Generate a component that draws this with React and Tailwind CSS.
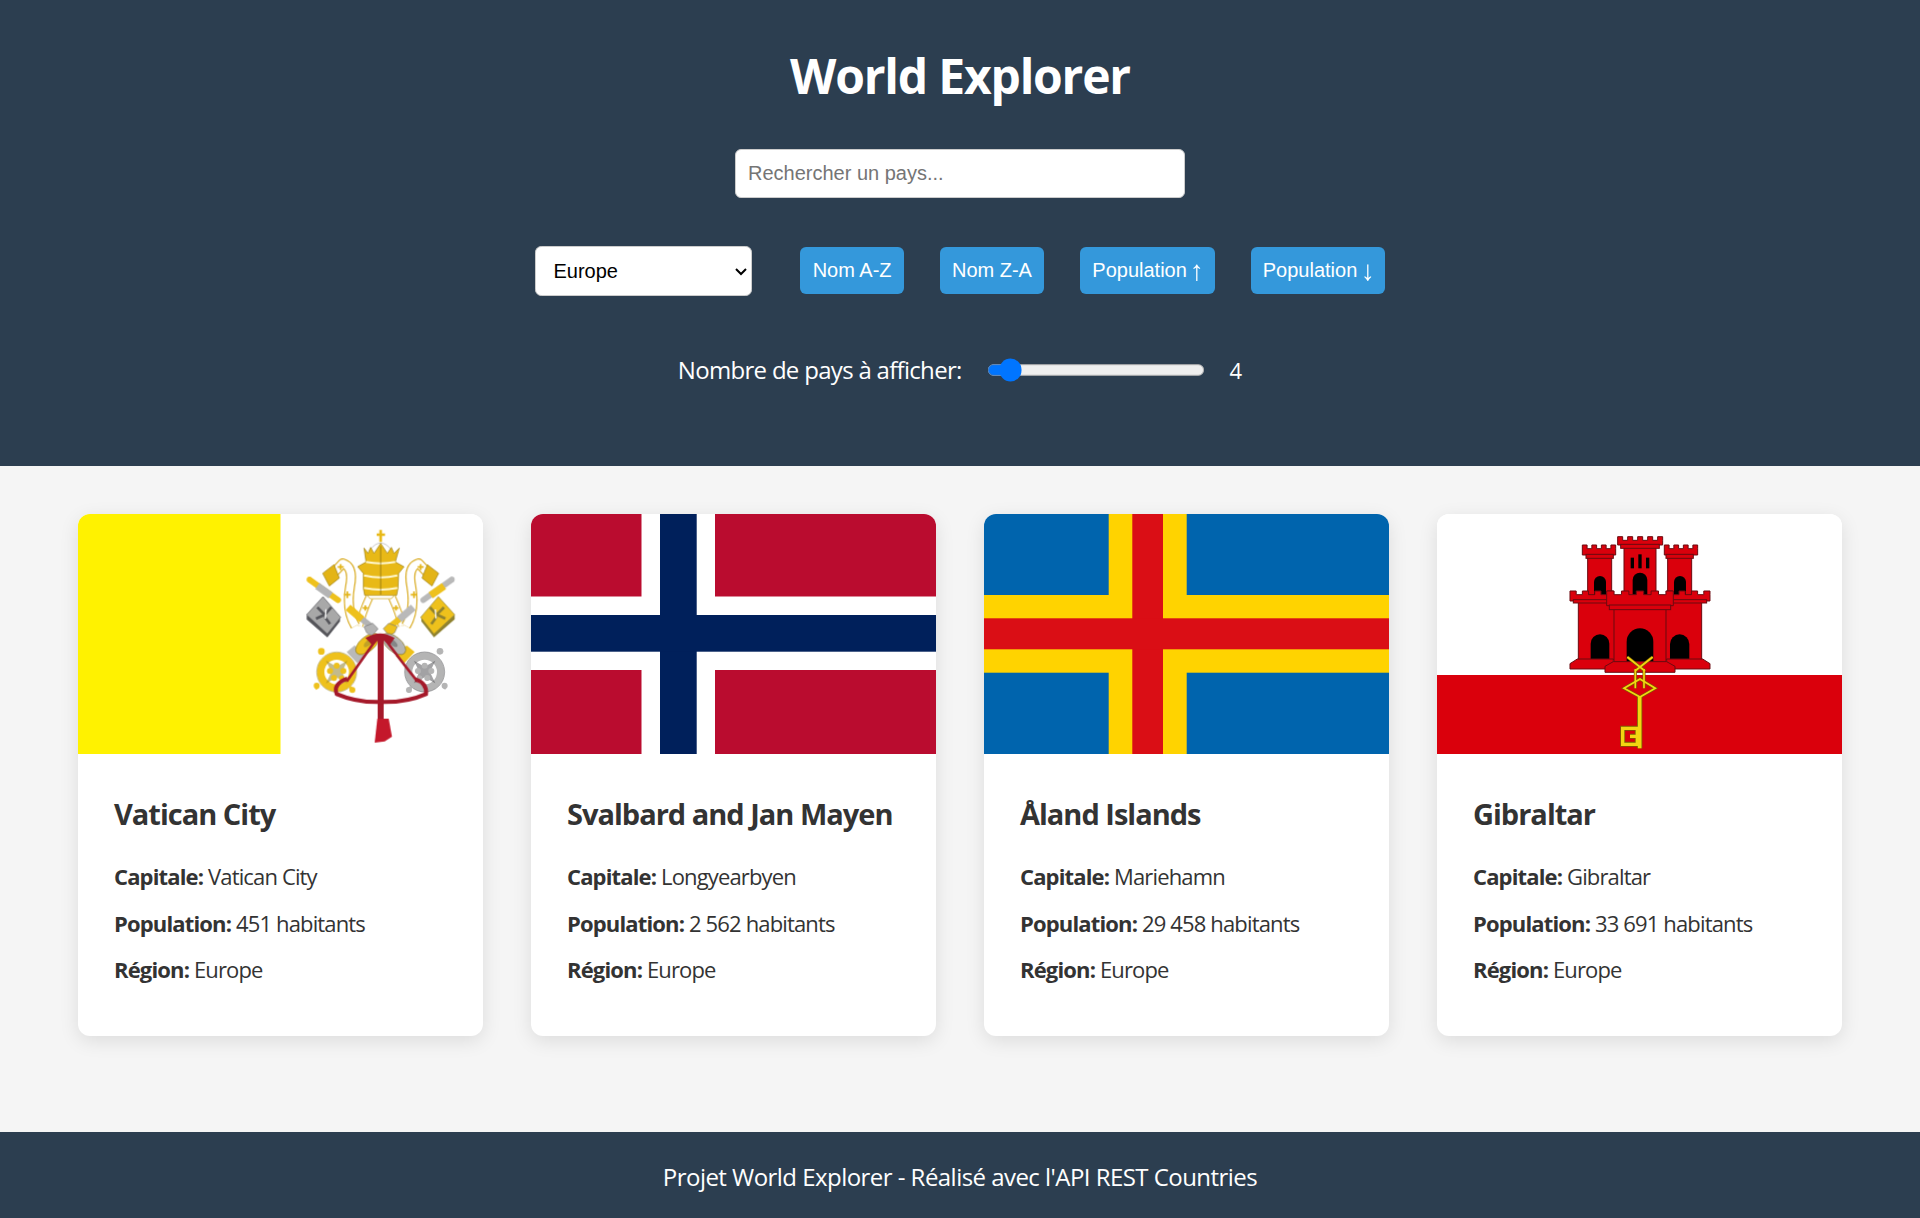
import { useState } from 'react';

const countries = [
  { name: 'Vatican City', capital: 'Vatican City', population: '451', flag: 'va' },
  { name: 'Svalbard and Jan Mayen', capital: 'Longyearbyen', population: '2 562', flag: 'sj' },
  { name: 'Åland Islands', capital: 'Mariehamn', population: '29 458', flag: 'ax' },
  { name: 'Gibraltar', capital: 'Gibraltar', population: '33 691', flag: 'gi' },
];

const sortButtons = [
  { label: 'Nom A-Z' },
  { label: 'Nom Z-A' },
  { label: 'Population ', arrow: '↑' },
  { label: 'Population ', arrow: '↓' },
];

// one papal key, drawn with its bow low on the left and its bit high on the right
function PapalKey({ main, second, dark, bit }) {
  return (
    <g>
      <path d="M400 240 L484 180" stroke={second} strokeWidth="18" strokeLinecap="round" />
      <path d="M422 226 L462 198" stroke={main} strokeWidth="22" />
      <circle cx="486" cy="178" r="8" fill={second} />
      <path d="M302 318 L345 284" stroke={main} strokeWidth="18" />
      <path d="M328 298 L370 262" stroke={second} strokeWidth="22" />
      <path d="M432 352 L394 304 L394 290 L432 338 L494 284 L494 298 Z" fill={dark} />
      <path d="M445 230 L494 284 L432 342 L392 292 Z" fill={bit} stroke={dark} strokeWidth="2" />
      <path d="M420 262 L440 284 M462 262 L442 282 M424 312 L440 290 M440 284 L466 296" stroke={dark} strokeWidth="8" />
      <path d="M436 268 L438 296" stroke="#fff" strokeWidth="4" />
      <path d="M296 310 L322 320 L314 338 L298 348 L280 326 Z" fill={main} stroke="#777" strokeWidth="2" />
      <path d="M170 396 L202 430 L226 408 L194 376 Z" fill={second} />
      <ellipse cx="232" cy="372" rx="42" ry="22" transform="rotate(-40 232 372)" fill={main} stroke="#8a7a20" strokeWidth="2" />
      <ellipse cx="236" cy="368" rx="18" ry="8" transform="rotate(-40 236 368)" fill={dark} opacity="0.5" />
      <circle cx="140" cy="456" r="48" fill="#fff" stroke={main} strokeWidth="22" />
      <circle cx="140" cy="456" r="60" fill="none" stroke={dark} strokeWidth="1.5" />
      <path d="M108 422 L140 440 L172 422 L156 456 L172 490 L140 472 L108 490 L124 456 Z" fill={dark} opacity="0.55" />
      <circle cx="140" cy="437" r="9" fill={main} />
      <circle cx="120" cy="453" r="9" fill={main} />
      <circle cx="160" cy="453" r="9" fill={main} />
      <circle cx="132" cy="474" r="9" fill={main} />
      <circle cx="155" cy="474" r="8" fill={main} />
      <path d="M100 400 L92 390 M84 500 L76 506 M180 500 L188 512" stroke={main} strokeWidth="9" />
      <circle cx="94" cy="394" r="10" fill={main} />
      <circle cx="80" cy="497" r="9" fill={main} />
      <circle cx="187" cy="510" r="9" fill={main} />
    </g>
  );
}

function Lappet() {
  return (
    <g fill="none">
      <path d="M238 232 Q216 280 208 318" stroke="#d8a91c" strokeWidth="24" />
      <path d="M238 232 Q216 280 208 318" stroke="#fff" strokeWidth="18" />
      <path d="M122 168 L158 130 Q192 140 180 200 Q168 270 196 318" stroke="#d8a91c" strokeWidth="30" strokeLinejoin="round" />
      <path d="M122 168 L158 130 Q192 140 180 200 Q168 270 196 318" stroke="#fff" strokeWidth="23" strokeLinejoin="round" />
      <path d="M98 160 L132 134 L148 174 L118 198 Z" fill="#e3b416" stroke="#9a7d10" strokeWidth="2" />
      <path d="M172 214 V234 M162 224 H182 M152 132 V150 M143 141 H161 M226 256 V272 M218 264 H234" stroke="#e3b416" strokeWidth="5" />
    </g>
  );
}

function VaticanFlag() {
  return (
    <svg viewBox="0 0 405 240" className="block h-[240px] w-full">
      <rect width="405" height="240" fill="#fff" />
      <rect width="202.5" height="240" fill="#fff200" />
      <g transform="translate(212 6) scale(0.3333)" style={{ filter: 'blur(1.2px)' }}>
        <Lappet />
        <g transform="translate(544 0) scale(-1 1)"><Lappet /></g>
        <PapalKey main="#eec11c" second="#b9b9b9" dark="#8f8230" bit="#eec11c" />
        <g transform="translate(544 0) scale(-1 1)">
          <PapalKey main="#b4b4b4" second="#eec11c" dark="#55555a" bit="#a8a8a8" />
        </g>
        {/* tiara */}
        <path d="M272 30 V66 M260 44 H285" stroke="#e8b917" strokeWidth="8" />
        <path d="M238 92 Q272 46 306 92" fill="none" stroke="#aaa" strokeWidth="2" />
        <path d="M222 84 L234 100 L242 82 L252 100 L272 70 L292 100 L304 82 L312 100 L328 84 L316 126 L342 140 L326 160 L324 205 L320 226 L224 226 L220 205 L220 160 L203 140 L228 126 Z" fill="#e8b917" stroke="#9a7d10" strokeWidth="2" />
        <path d="M228 126 Q272 134 316 126 M222 166 Q272 178 322 166 M222 204 Q272 214 322 204" fill="none" stroke="#fff8d0" strokeWidth="6" />
        <path d="M272 78 V224" stroke="#7a6510" strokeWidth="2" />
        <path d="M232 226 H312 L304 236 H240 Z" fill="#fff" stroke="#c9a21a" strokeWidth="2" />
        {/* cords */}
        <path d="M268 345 Q215 420 170 484 M276 345 Q330 420 382 484" fill="none" stroke="#a5192a" strokeWidth="8" />
        <path d="M226 354 Q270 326 314 354 L298 376 L272 354 L248 376 Z" fill="#a5192a" />
        <path d="M272 345 V610" stroke="#a5192a" strokeWidth="18" />
        <path d="M172 476 Q128 492 140 522 Q200 548 272 546 Q350 548 408 522 Q412 490 376 478" fill="none" stroke="#a5192a" strokeWidth="12" />
        <path d="M262 596 H296 L306 650 L284 664 L254 668 Z" fill="#c4182b" />
      </g>
    </svg>
  );
}

function NorwayFlag() {
  return (
    <svg viewBox="0 0 405 240" className="block h-[240px] w-full">
      <rect width="405" height="240" fill="#ba0c2f" />
      <rect x="110.5" width="73.5" height="240" fill="#fff" />
      <rect y="82.5" width="405" height="73.5" fill="#fff" />
      <rect x="129" width="36.7" height="240" fill="#00205b" />
      <rect y="101" width="405" height="36.7" fill="#00205b" />
    </svg>
  );
}

function AlandFlag() {
  return (
    <svg viewBox="0 0 405 240" className="block h-[240px] w-full">
      <rect width="405" height="240" fill="#0064ad" />
      <rect x="124.7" width="78" height="240" fill="#ffd300" />
      <rect y="81" width="405" height="77.7" fill="#ffd300" />
      <rect x="148.3" width="30.7" height="240" fill="#da0e15" />
      <rect y="104.3" width="405" height="31" fill="#da0e15" />
    </svg>
  );
}

// battlement path: n merlons between x0 and x1, from yTop down to yBottom
const crenel = (x0, x1, yTop, yBottom, n) => {
  const step = (x1 - x0) / (2 * n - 1);
  let d = `M${x0} ${yBottom}`;
  for (let i = 0; i < n; i++) {
    const a = x0 + i * 2 * step;
    d += ` L${a} ${yTop} L${a + step} ${yTop} L${a + step} ${yTop + 11}`;
    if (i < n - 1) d += ` L${a + 2 * step} ${yTop + 11}`;
  }
  return d + ` L${x1} ${yBottom} Z`;
};

const arch = (x0, x1, top, bottom) => {
  const r = (x1 - x0) / 2;
  return `M${x0} ${bottom} V${top + r} A${r} ${r} 0 0 1 ${x1} ${top + r} V${bottom} Z`;
};

function GibraltarFlag() {
  const wall = { fill: '#da000c', stroke: '#6b0a10', strokeWidth: 3 };
  return (
    <svg viewBox="0 0 405 240" className="block h-[240px] w-full">
      <rect width="405" height="240" fill="#fff" />
      <rect y="161" width="405" height="79" fill="#da000c" />
      <g transform="translate(113 11) scale(0.3333)" style={{ filter: 'blur(1px)' }}>
        <rect x="113" y="95" width="72" height="115" {...wall} />
        <rect x="353" y="95" width="72" height="115" {...wall} />
        <path d={crenel(97, 197, 60, 90, 4)} {...wall} />
        <rect x="108" y="88" width="82" height="12" {...wall} />
        <path d={crenel(343, 443, 60, 90, 4)} {...wall} />
        <rect x="348" y="88" width="82" height="12" {...wall} />
        <rect x="222" y="65" width="96" height="150" {...wall} />
        <path d={crenel(203, 338, 35, 60, 5)} {...wall} />
        <rect x="212" y="58" width="116" height="12" {...wall} />
        <path d={arch(132, 168, 153, 217)} fill="#000" />
        <path d={arch(372, 408, 153, 217)} fill="#000" />
        <path d={arch(248, 292, 143, 217)} fill="#000" />
        <rect x="242" y="98" width="10" height="32" fill="#000" />
        <rect x="265" y="88" width="10" height="42" fill="#000" />
        <rect x="288" y="98" width="10" height="32" fill="#000" />
        <rect x="85" y="232" width="110" height="172" {...wall} />
        <rect x="345" y="232" width="110" height="172" {...wall} />
        <path d={crenel(60, 190, 198, 228, 4)} {...wall} />
        <path d={crenel(350, 480, 198, 228, 4)} {...wall} />
        <rect x="70" y="224" width="120" height="10" {...wall} />
        <rect x="350" y="224" width="120" height="10" {...wall} />
        <rect x="192" y="252" width="156" height="160" {...wall} />
        <path d={crenel(170, 370, 198, 242, 5)} {...wall} />
        <rect x="178" y="240" width="184" height="14" {...wall} />
        <path d={arch(122, 178, 328, 402)} fill="#000" />
        <path d={arch(360, 418, 328, 402)} fill="#000" />
        <path d={arch(230, 310, 310, 412)} fill="#000" />
        <path d="M60 432 V416 L82 402 H190 V432 Z" {...wall} />
        <path d="M480 432 V416 L458 402 H350 V432 Z" {...wall} />
        <path d="M165 442 V424 L190 410 H350 L375 424 V442 Z" {...wall} />
        <g fill="none" stroke="#7a5f00" strokeWidth="9">
          <path d="M232 396 L285 438 M308 396 L255 438" />
          <path d="M256 432 V490 M282 432 V490" />
          <path d="M222 490 L270 462 L316 490 L270 516 Z" />
          <path d="M269 516 V670" strokeWidth="16" />
          <path d="M218 610 H262 V658 H218 Z M240 634 H262" strokeWidth="15" />
        </g>
        <g fill="none" stroke="#f3d511" strokeWidth="5">
          <path d="M232 396 L285 438 M308 396 L255 438" />
          <path d="M256 432 V490 M282 432 V490" />
          <path d="M222 490 L270 462 L316 490 L270 516 Z" />
          <path d="M269 516 V670" strokeWidth="11" />
          <path d="M218 610 H262 V658 H218 Z M240 634 H262" strokeWidth="10" />
        </g>
      </g>
    </svg>
  );
}

const flags = { va: VaticanFlag, sj: NorwayFlag, ax: AlandFlag, gi: GibraltarFlag };

function CountryCard({ country }) {
  const Flag = flags[country.flag];
  return (
    <div className="h-[522px] overflow-hidden rounded-[12px] bg-white shadow-[0_5px_19px_rgba(0,0,0,0.1)]">
      <Flag />
      <div className="px-9 pt-[36px]">
        <h3 className="mb-[22px] text-[29px] leading-[48px] font-bold tracking-[-1px] whitespace-nowrap">{country.name}</h3>
        <p className="mb-[14.5px] text-[22px] leading-[32px] tracking-[-0.85px]"><strong className="font-bold">Capitale:</strong> {country.capital}</p>
        <p className="mb-[14.5px] text-[22px] leading-[32px] tracking-[-0.85px]"><strong className="font-bold">Population:</strong> {country.population} habitants</p>
        <p className="text-[22px] leading-[32px] tracking-[-0.85px]"><strong className="font-bold">Région:</strong> Europe</p>
      </div>
    </div>
  );
}

export default function App() {
  const [region, setRegion] = useState('Europe');
  const [count, setCount] = useState(4);

  return (
    <div className="flex min-h-screen flex-col bg-[#f5f5f5] font-['Open_Sans',sans-serif] text-[#333]">
      <header className="flex h-[466px] flex-col items-center bg-[#2c3e50] pt-[44px] text-white">
        <h1 className="text-[48px] leading-[64px] font-bold tracking-[-1.2px]">World Explorer</h1>
        <input
          type="text"
          placeholder="Rechercher un pays..."
          className="mt-[41px] h-[49px] w-[450px] rounded-[6px] border border-[#ccc] bg-white px-3 font-['Liberation_Sans',sans-serif] text-[20px] text-black placeholder:text-[#757575]"
        />
        <div className="mt-[48px] flex items-center gap-[36px]">
          <select
            value={region}
            onChange={(e) => setRegion(e.target.value)}
            className="mr-[9.6px] h-[40px] w-[174px] rounded-[5px] border border-[#ccc] bg-white pl-[10px] font-['Liberation_Sans',sans-serif] text-[16px] text-black [zoom:1.25]"
          >
            <option>Europe</option>
            <option>Asia</option>
            <option>Africa</option>
            <option>Americas</option>
            <option>Oceania</option>
          </select>
          {sortButtons.map((b) => (
            <button key={b.label + (b.arrow || '')} className="mb-[1px] h-[47px] rounded-[6px] bg-[#3498db] px-[12.2px] pb-[1px] font-['Liberation_Sans',sans-serif] text-[20px] text-white">
              {b.label}
              {b.arrow && <span className="inline-block scale-[1.4]">{b.arrow}</span>}
            </button>
          ))}
        </div>
        <div className="mt-[56px] flex items-center gap-[25px] text-[24px]">
          <label className="tracking-[-0.7px]">Nombre de pays à afficher:</label>
          <input
            type="range"
            min="1"
            max="50"
            value={count}
            onChange={(e) => setCount(Number(e.target.value))}
            className="w-[150.3px] [zoom:1.45]"
          />
          <span className="text-[22px]">{count}</span>
        </div>
      </header>

      <main className="grid flex-1 grid-cols-4 content-start gap-[48px] px-[78px] pt-[48px]">
        {countries.map((c) => <CountryCard key={c.flag} country={c} />)}
      </main>

      <footer className="flex h-[86px] items-center justify-center bg-[#2c3e50] pt-[4px] text-[24px] tracking-[-0.54px] text-white">
        Projet World Explorer - Réalisé avec l'API REST Countries
      </footer>
    </div>
  );
}
